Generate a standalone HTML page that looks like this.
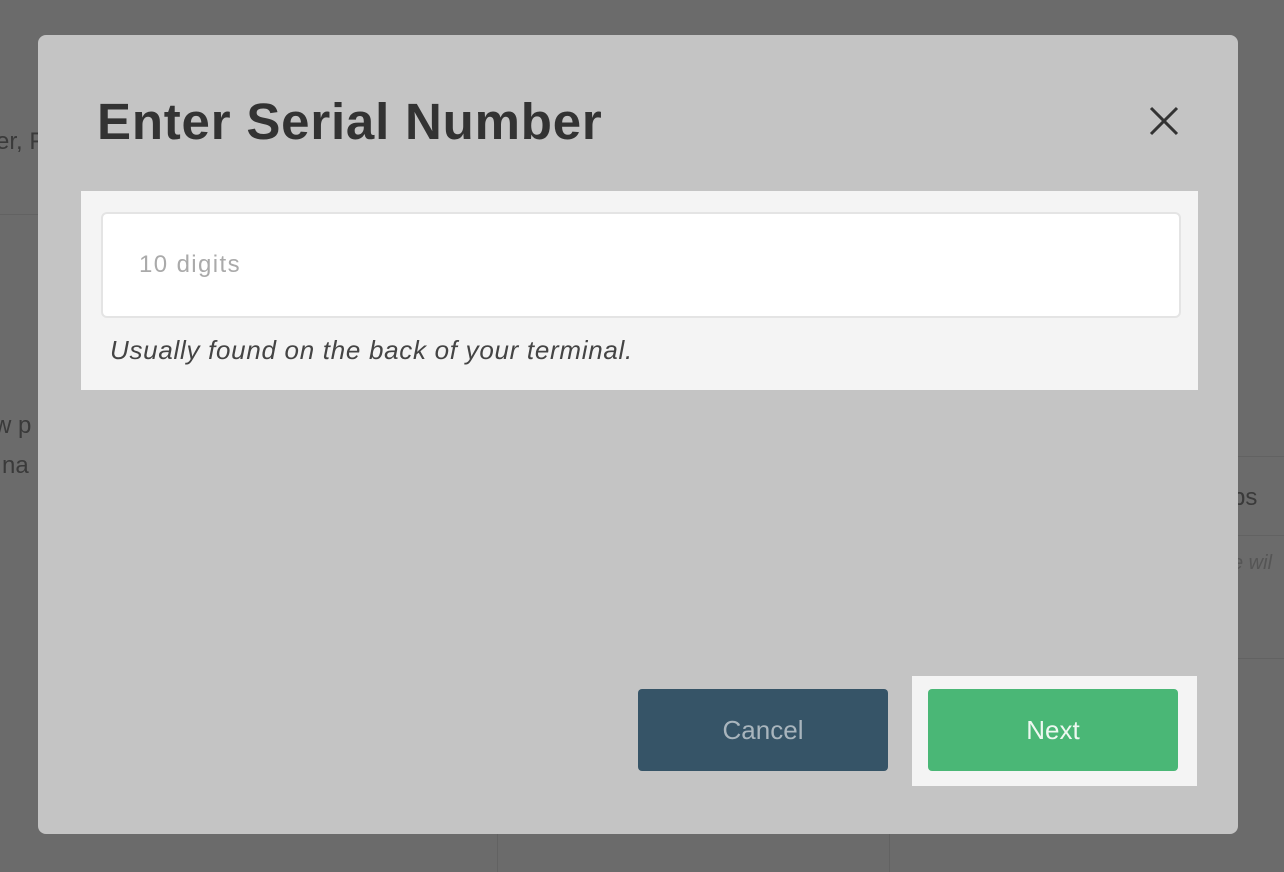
<!DOCTYPE html>
<html><head><style>
html,body{margin:0;padding:0;width:1284px;height:872px;overflow:hidden;background:#6b6b6b;font-family:"Liberation Sans",sans-serif;position:relative}
.abs{position:absolute}
.bgtxt{color:#3a3a3a;font-size:24px}
</style></head><body>
<div class="abs" style="left:0;top:214px;width:38px;height:1px;background:#626262"></div>
<div class="abs bgtxt" style="left:-4px;top:128px">er, F</div>
<div class="abs bgtxt" style="left:-6px;top:412px">w p</div>
<div class="abs bgtxt" style="left:2px;top:452px">na</div>
<div class="abs" style="left:1238px;top:456px;width:46px;height:201px;border-top:1px solid #626262;border-bottom:1px solid #626262"></div>
<div class="abs" style="left:1238px;top:535px;width:46px;height:1px;background:#626262"></div>
<div class="abs bgtxt" style="left:1232px;top:484px">ps</div>
<div class="abs" style="left:1232px;top:552px;color:#555;font-size:20px;font-style:italic">e wil</div>
<div class="abs" style="left:497px;top:834px;width:1px;height:38px;background:#626262"></div>
<div class="abs" style="left:889px;top:834px;width:1px;height:38px;background:#626262"></div>

<div class="abs" style="left:38px;top:35px;width:1200px;height:799px;background:#c4c4c4;border-radius:8px"></div>
<div class="abs" style="left:97px;top:92px;font-size:51px;font-weight:bold;color:#333;letter-spacing:0.8px">Enter Serial Number</div>
<svg class="abs" style="left:1148px;top:105px" width="32" height="32" viewBox="0 0 32 32"><path d="M3 3L29 29M29 3L3 29" stroke="#333" stroke-width="3" fill="none"/></svg>

<div class="abs" style="left:81px;top:191px;width:1117px;height:199px;background:#f4f4f4"></div>
<div class="abs" style="left:101px;top:212px;width:1076px;height:102px;background:#fff;border:2px solid #e4e4e4;border-radius:6px"></div>
<div class="abs" style="left:139px;top:251px;font-size:24px;color:#aaa;letter-spacing:1.4px">10 digits</div>
<div class="abs" style="left:110px;top:335px;font-size:26px;font-style:italic;color:#444;letter-spacing:0.7px">Usually found on the back of your terminal.</div>

<div class="abs" style="left:638px;top:689px;width:250px;height:82px;background:#365467;border-radius:4px;color:#a9b5bd;font-size:26px;text-align:center;line-height:82px">Cancel</div>
<div class="abs" style="left:912px;top:676px;width:285px;height:110px;background:#f4f4f4"></div>
<div class="abs" style="left:928px;top:689px;width:250px;height:82px;background:#4ab776;border-radius:4px;color:#eef8f1;font-size:26px;text-align:center;line-height:82px">Next</div>
</body></html>
